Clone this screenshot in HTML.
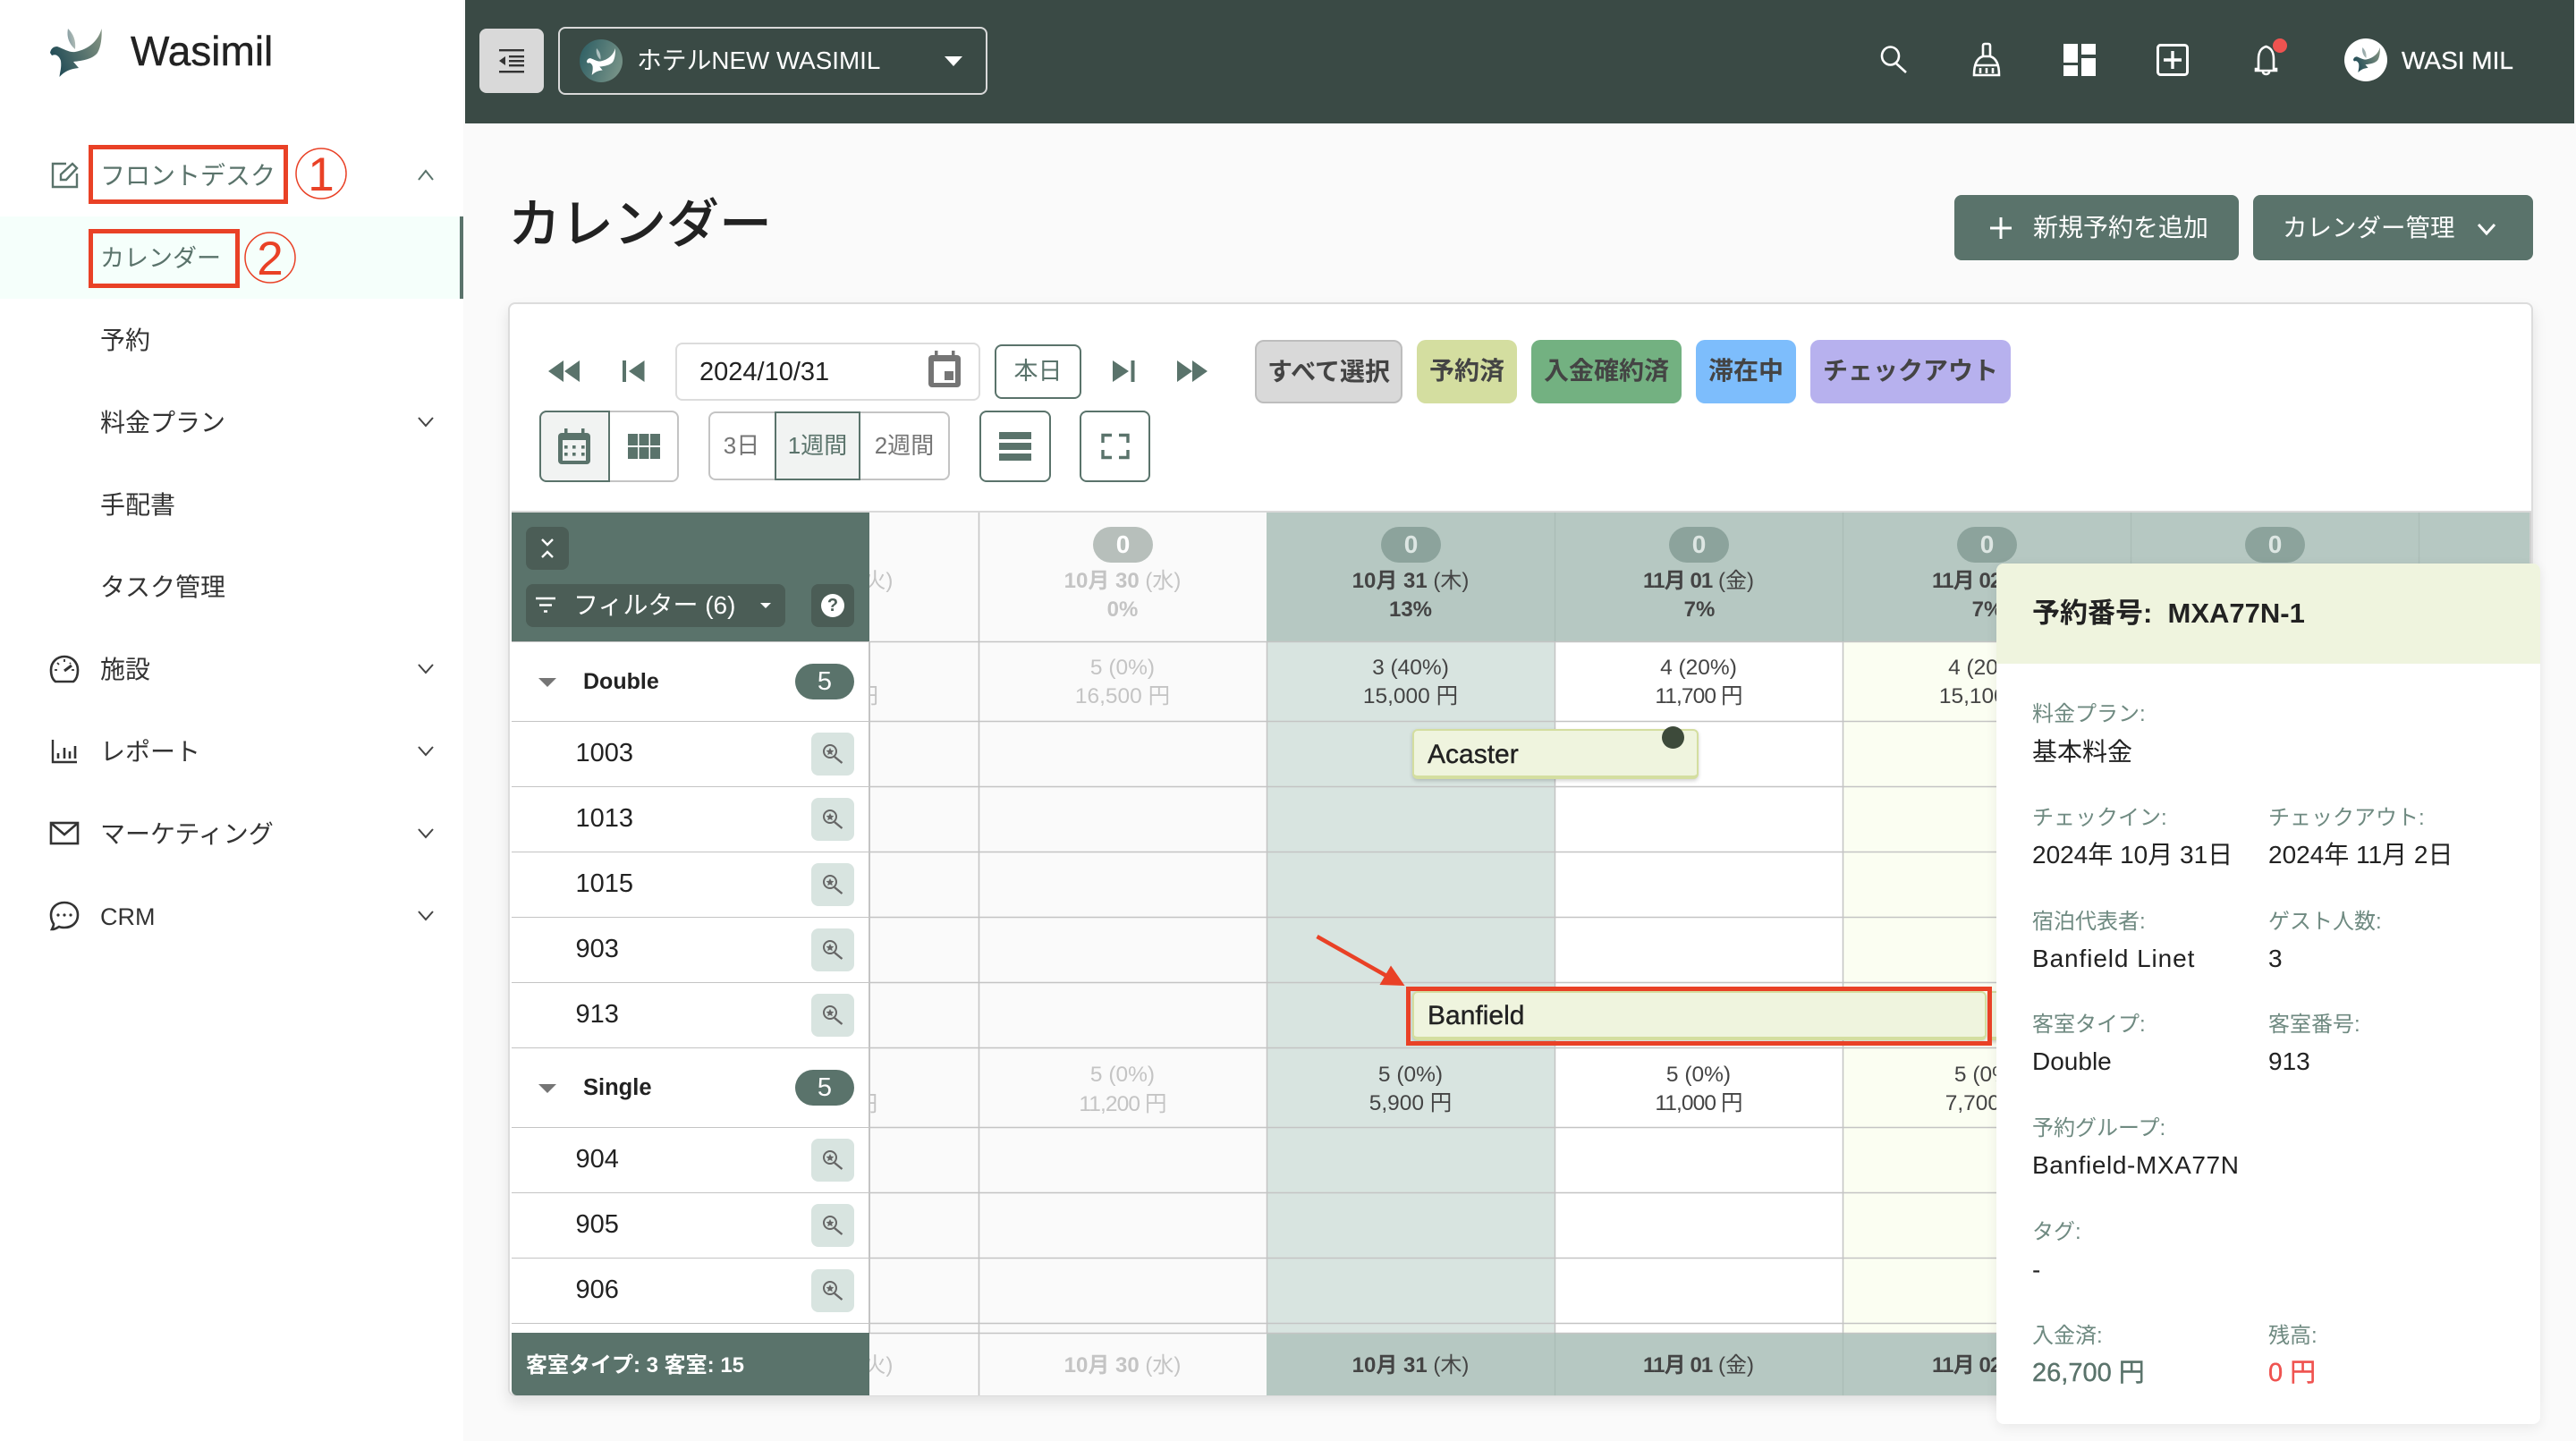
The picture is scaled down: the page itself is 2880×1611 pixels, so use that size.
<!DOCTYPE html>
<html lang="ja">
<head>
<meta charset="utf-8">
<title>Wasimil カレンダー</title>
<style>
html,body{margin:0;padding:0;width:2880px;height:1611px;overflow:hidden;background:#fafafa;font-family:"Liberation Sans","Noto Sans CJK JP",sans-serif;color:#333}
.a{position:absolute;box-sizing:border-box}
.t{position:absolute;white-space:nowrap;line-height:40px;height:40px}
.c{width:320px;text-align:center}
svg{position:absolute;left:0;top:0}
.s{font-size:28px;color:#333}
.g{color:#c4c4c4}
.d{color:#444}
.h{font-size:24px}
.v{font-size:24.5px}
.n{letter-spacing:-.9px}
.bd{position:absolute;top:589px;width:67px;height:40px;border-radius:20px;background:#8ca39c;color:#dde6e3;font-weight:700;font-size:28px;line-height:40px;text-align:center}
.rb{position:absolute;left:907px;width:48px;height:48px;border-radius:8px;background:#d8e4e0}
.rm{font-size:29px;color:#222;left:643.5px}
.chip{position:absolute;box-sizing:border-box;top:380px;height:71px;border-radius:10px;font-size:28px;font-weight:700;color:#444;line-height:69px;text-align:center}
.l{font-size:24px;color:#6f8a81}
.w{font-size:28px;color:#222}
.ev{position:absolute;box-sizing:border-box;left:1579px;background:#eff4de;border:2px solid #d4dea0;border-bottom-width:4px;border-radius:6px;box-shadow:0 2px 4px rgba(0,0,0,.18)}
.evt{font-size:30px;color:#222;left:1596px;-webkit-text-stroke:.4px #222}
</style>
</head>
<body>
<svg width="0" height="0" style="position:absolute">
<defs>
<linearGradient id="lg" x1="0" y1="0.6" x2="1" y2="0.2"><stop offset="0" stop-color="#1f4a55"/><stop offset="1" stop-color="#7f9080"/></linearGradient>
<symbol id="bird" viewBox="55 32 60 54"><path d="M113.6 32C110 45 100 55 84 58C78 59 72 55 64 52C60 52 57 54 56 59L58 62C62 60 66 62 68 68C69 76 67 80 66.5 86C72 80 78 77 88 76L82 69C92 68 104 66 109 59C113 52 114 42 113.6 32Z"/><path opacity=".55" d="M76 32C74 42 78 50 84 55C85 45 82 38 76 32Z"/></symbol>
<symbol id="zm" viewBox="0 0 48 48"><circle cx="21" cy="21" r="7" fill="none" stroke="#666" stroke-width="2"/><path d="M26 27L34.5 34" stroke="#666" stroke-width="2.4" fill="none"/><path d="M21 17l1.3 2.7 3 .4-2.2 2 .6 3-2.7-1.5-2.7 1.5.6-3-2.2-2 3-.4z" fill="#666"/></symbol>
</defs>
</svg>

<!-- sidebar -->
<div class="a" style="left:0;top:0;width:518px;height:1611px;background:#fff"></div>
<div class="a" style="left:0;top:242px;width:518px;height:92px;background:#f5fffb"></div>
<div class="a" style="left:514px;top:242px;width:4px;height:92px;background:#5a736b"></div>
<svg width="114" height="86" viewBox="0 0 114 86" style="overflow:visible"><use href="#bird" x="55" y="32" width="60" height="54" fill="url(#lg)"/></svg>
<div class="t" style="left:146px;top:37px;font-size:46px;color:#222;-webkit-text-stroke:.4px #222">Wasimil</div>
<div class="t s" style="left:112px;top:177px;color:#5a736b">フロントデスク</div>
<div class="t s" style="left:112px;top:269px;font-size:27px;color:#5a736b">カレンダー</div>
<div class="t s" style="left:112px;top:361px">予約</div>
<div class="t s" style="left:112px;top:453px">料金プラン</div>
<div class="t s" style="left:112px;top:545px">手配書</div>
<div class="t s" style="left:112px;top:637px">タスク管理</div>
<div class="t s" style="left:112px;top:729px">施設</div>
<div class="t s" style="left:112px;top:821px">レポート</div>
<div class="t s" style="left:112px;top:913px">マーケティング</div>
<div class="t s" style="left:112px;top:1005px;font-size:27px">CRM</div>

<!-- topbar -->
<div class="a" style="left:520px;top:0;width:2358px;height:138px;background:#3a4a45"></div>
<div class="a" style="left:536px;top:32px;width:72px;height:72px;background:#d9d9d9;border-radius:8px"></div>
<div class="a" style="left:624px;top:30px;width:480px;height:76px;border:2px solid #d9d9d9;border-radius:8px"></div>
<div class="a" style="left:648px;top:44px;width:48px;height:48px;border-radius:50%;background:linear-gradient(110deg,#2a5c62,#80998c)"></div>
<div class="t" style="left:712px;top:48px;font-size:27.8px;color:#fff">ホテルNEW WASIMIL</div>
<div class="a" style="left:2621px;top:43px;width:48px;height:48px;border-radius:50%;background:#fff"></div>
<div class="t" style="left:2685px;top:48px;font-size:28px;color:#fff;-webkit-text-stroke:.3px #fff">WASI MIL</div>

<svg width="2880" height="1611" viewBox="0 0 2880 1611">
<!-- sidebar icons -->
<g fill="none" stroke="#5a736b" stroke-width="2.4">
<path d="M74 183H59V209H86V194"/><path d="M68 201V195L81 183L86 188L74 201Z"/>
</g>
<path d="M468 201L476 191L484 201" fill="none" stroke="#5a736b" stroke-width="2"/>
<g fill="none" stroke="#444" stroke-width="2">
<path d="M468 467L476 476L484 467"/><path d="M468 743L476 752L484 743"/><path d="M468 835L476 844L484 835"/><path d="M468 927L476 936L484 927"/><path d="M468 1019L476 1028L484 1019"/>
</g>
<g fill="none" stroke="#333" stroke-width="2.6">
<path d="M62 762C58 759 57 754 57 749C57 740 64 734 72 734C80 734 87 740 87 749C87 754 86 759 82 762Z"/>
<path d="M72 750L80 744" stroke-width="3"/><path d="M72 737v3M61 749h3M80 749h3M64 741l2 2M79 741l-1 1" stroke-width="1.8"/>
<path d="M59 827V852H86" stroke-width="2.4"/>
<path d="M65 848V842M72 848V836M78 848V840M84 848V834" stroke-width="2.6"/>
<rect x="57" y="920" width="30" height="23"/><path d="M58 921L72 933L86 921"/>
<path d="M72 1009C63 1009 57 1015 57 1023C57 1027 58 1030 60 1033C60 1035 59 1037 58 1039C62 1039 64 1037 66 1036C68 1037 70 1037 72 1037C81 1037 87 1031 87 1023C87 1015 81 1009 72 1009Z"/>
</g>
<g fill="#333"><circle cx="65" cy="1023" r="1.6"/><circle cx="72" cy="1023" r="1.6"/><circle cx="79" cy="1023" r="1.6"/></g>
<!-- top left icons -->
<g fill="#333">
<rect x="558" y="55" width="28" height="2.4"/><rect x="569" y="62" width="17" height="2.4"/><rect x="569" y="67" width="17" height="2.4"/><rect x="569" y="72" width="17" height="2.4"/><rect x="558" y="79" width="28" height="2.4"/><path d="M558 68L565 63V73Z"/>
</g>
<path d="M1056 63H1076L1066 74Z" fill="#fff"/>
<use href="#bird" x="655" y="54" width="34" height="30" fill="#fff"/>
<use href="#bird" x="2630" y="53" width="32" height="28" fill="url(#lg)"/>
<!-- top right icons -->
<g fill="none" stroke="#fff" stroke-width="2.6">
<ellipse cx="2113.5" cy="62.5" rx="9.5" ry="10"/><path d="M2120 71L2131 81"/>
<path d="M2217 63V51a2 2 0 0 1 2-2h4a2 2 0 0 1 2 2V63M2217 63C2210 65 2207 72 2207 84H2235C2235 72 2232 65 2225 63Z"/>
<path d="M2208 73H2234M2214 76V82M2221 76V82M2228 76V82"/>
<rect x="2412.5" y="50.5" width="33" height="33" rx="3" stroke-width="3"/>
<path d="M2429 57V77M2419 67H2439" stroke-width="3.4"/>
<path d="M2533.5 52C2527 54 2525 59 2525 66V77H2522V79H2545V77H2542V66C2542 59 2540 54 2533.5 52Z"/><path d="M2530 80C2530 84 2537 84 2537 80"/>
</g>
<g fill="#fff">
<rect x="2307" y="49" width="16" height="21"/><rect x="2307" y="73" width="16" height="12"/><rect x="2327" y="49" width="16" height="12"/><rect x="2327" y="65" width="16" height="20"/>
</g>
<circle cx="2549" cy="51" r="8" fill="#ef5350"/>
</svg>

<!-- page head -->
<div class="t" style="left:568px;top:221px;height:60px;line-height:60px;font-size:59px;font-weight:500;color:#222">カレンダー</div>
<div class="a" style="left:2185px;top:218px;width:318px;height:73px;background:#5a736b;border-radius:8px"></div>
<div class="a" style="left:2519px;top:218px;width:313px;height:73px;background:#5a736b;border-radius:8px"></div>
<div class="t" style="left:2273px;top:235px;font-size:28px;color:#fff">新規予約を追加</div>
<div class="t" style="left:2552px;top:235px;font-size:27.5px;color:#fff">カレンダー管理</div>

<!-- card -->
<div class="a" style="left:568px;top:338px;width:2264px;height:1223px;background:#fff;border:2px solid #dcdcdc;border-radius:8px;box-shadow:0 8px 16px rgba(0,0,0,.1)"></div>

<!-- toolbar -->
<div class="a" style="left:755px;top:383px;width:341px;height:65px;border:2px solid #dcdcdc;border-radius:8px;background:#fff"></div>
<div class="t" style="left:782px;top:396px;font-size:29px;color:#222">2024/10/31</div>
<div class="a" style="left:1112px;top:385px;width:97px;height:61px;border:2px solid #5a736b;border-radius:8px"></div>
<div class="t" style="left:1112px;top:395px;width:97px;text-align:center;font-size:27px;color:#5a736b">本日</div>
<div class="a" style="left:603px;top:459px;width:156px;height:80px;border:2px solid #c4c4c4;border-radius:8px"></div>
<div class="a" style="left:603px;top:459px;width:79px;height:80px;border:2px solid #5a736b;border-radius:8px 0 0 8px;background:#f1f3f2"></div>
<div class="a" style="left:792px;top:460px;width:270px;height:77px;border:2px solid #c4c4c4;border-radius:8px"></div>
<div class="a" style="left:866px;top:460px;width:96px;height:77px;border:2px solid #5a736b;background:#f1f3f2"></div>
<div class="t" style="left:789px;width:80px;top:478px;text-align:center;font-size:26px;color:#757575">3日</div>
<div class="t" style="left:866px;width:96px;top:478px;text-align:center;font-size:26px;color:#5a736b">1週間</div>
<div class="t" style="left:962px;width:98px;top:478px;text-align:center;font-size:26px;color:#757575">2週間</div>
<div class="a" style="left:1095px;top:459px;width:80px;height:80px;border:2px solid #5a736b;border-radius:8px"></div>
<div class="a" style="left:1207px;top:459px;width:79px;height:80px;border:2px solid #5a736b;border-radius:8px"></div>

<div class="chip" style="left:1403px;width:165px;background:#d9d9d9;border:2px solid #bdbdbd;line-height:67px">すべて選択</div>
<div class="chip" style="left:1584px;width:112px;background:#d4dea0">予約済</div>
<div class="chip" style="left:1712px;width:168px;background:#73b181">入金確約済</div>
<div class="chip" style="left:1896px;width:112px;background:#7dbdfc">滞在中</div>
<div class="chip" style="left:2024px;width:224px;background:#b7b1ee">チェックアウト</div>

<!-- grid backgrounds -->
<div class="a" style="left:972px;top:571px;width:444px;height:989px;background:#fafafa"></div>
<div class="a" style="left:1416px;top:573px;width:1412px;height:144px;background:#b6c8c2"></div>
<div class="a" style="left:1416px;top:717px;width:322px;height:773px;background:#d8e4e0"></div>
<div class="a" style="left:1738px;top:717px;width:322px;height:773px;background:#fff"></div>
<div class="a" style="left:2060px;top:717px;width:768px;height:773px;background:#fbfef2"></div>
<div class="a" style="left:1416px;top:1490px;width:1412px;height:70px;background:#b6c8c2"></div>
<div class="a" style="left:572px;top:571px;width:2258px;height:2px;background:#d9d9d9"></div>

<svg width="2880" height="1611" viewBox="0 0 2880 1611">
<!-- toolbar icons -->
<g fill="#5a736b">
<path d="M630 403V427L613 415ZM648 403V427L631 415Z"/>
<rect x="696" y="403" width="4" height="24"/><path d="M720.5 403V427L703 415Z"/>
<path d="M1244 403V427L1262 415Z"/><rect x="1264.5" y="403" width="4" height="24"/>
<path d="M1316 403V427L1333 415ZM1333 403V427L1350 415Z"/>
<rect x="1117" y="483" width="36" height="8"/><rect x="1117" y="495" width="36" height="8"/><rect x="1117" y="507" width="36" height="8"/>
<rect x="702" y="485" width="11" height="13"/><rect x="714.5" y="485" width="11" height="13"/><rect x="727" y="485" width="11" height="13"/>
<rect x="702" y="500" width="11" height="13"/><rect x="714.5" y="500" width="11" height="13"/><rect x="727" y="500" width="11" height="13"/>
<rect x="624" y="484" width="36" height="35" rx="4"/><rect x="631" y="479" width="3.5" height="7"/><rect x="650" y="479" width="3.5" height="7"/>
</g>
<rect x="629" y="492" width="26" height="23" fill="#f1f3f2"/>
<g fill="#5a736b"><rect x="631" y="498" width="3.6" height="3.6"/><rect x="640" y="498" width="3.6" height="3.6"/><rect x="650" y="498" width="3.6" height="3.6"/><rect x="631" y="506" width="3.6" height="3.6"/><rect x="640" y="506" width="3.6" height="3.6"/><rect x="650" y="506" width="3.6" height="3.6"/></g>
<path d="M1233 495V486.5H1243M1251 486.5H1261V495M1233 503V511.5H1243M1251 511.5H1261V503" fill="none" stroke="#5a736b" stroke-width="3.4"/>
<g fill="#757575"><rect x="1038" y="397" width="36" height="36" rx="4"/><rect x="1045" y="392" width="3.5" height="7"/><rect x="1064" y="392" width="3.5" height="7"/></g>
<rect x="1044" y="404" width="24" height="24" fill="#fff"/><rect x="1056" y="415" width="10" height="10" fill="#757575"/>
<!-- grid lines -->
<g stroke="#c4c4c4" stroke-width="1.5" fill="none">
<path d="M572 717.5H2828M572 806.5H2828M572 879.5H2828M572 952.5H2828M572 1025.5H2828M572 1098.5H2828M572 1171.5H2828M572 1260.5H2828M572 1333.5H2828M572 1406.5H2828M572 1479.5H2828M572 1490.5H2828"/>
<path d="M1094.5 573V1560M1738.5 717V1490M2060.5 717V1490M1416.5 717V1490"/>
</g>
<path d="M1738.5 573V717M2060.5 573V717M2382.5 573V717M2704.5 573V717M1738.5 1490V1560M2060.5 1490V1560M2382.5 1490V1560M2704.5 1490V1560" stroke="#abbdb7" stroke-width="1.5" fill="none"/>
<path d="M2829 573V1560" stroke="#cfcfcf" stroke-width="2"/>
</svg>

<!-- date header texts -->
<div class="bd" style="left:1222px;background:#b7bfbb;color:#fff">0</div>
<div class="bd" style="left:1544px">0</div>
<div class="bd" style="left:1866px">0</div>
<div class="bd" style="left:2188px">0</div>
<div class="bd" style="left:2510px">0</div>

<div class="t c h g" style="left:773px;top:630px"><b>10月 29</b> (火)</div>
<div class="t c h g" style="left:1095px;top:630px"><b>10月 30</b> (水)</div>
<div class="t c h g" style="left:1095px;top:662px"><b>0%</b></div>
<div class="t c h d" style="left:1417px;top:630px"><b>10月 31</b> (木)</div>
<div class="t c h d" style="left:1417px;top:662px"><b>13%</b></div>
<div class="t c h d" style="left:1739px;top:630px"><b class="n">11月 01</b> (金)</div>
<div class="t c h d" style="left:1740px;top:662px"><b>7%</b></div>
<div class="t c h d" style="left:2062px;top:630px"><b class="n">11月 02</b> (土)</div>
<div class="t c h d" style="left:2062px;top:662px"><b>7%</b></div>

<!-- Double totals -->
<div class="t c v g" style="left:769px;top:759px">16,500 円</div>
<div class="t c v g" style="left:1095px;top:727px">5 (0%)</div>
<div class="t c v g" style="left:1095px;top:759px">16,500 円</div>
<div class="t c v d" style="left:1417px;top:727px">3 (40%)</div>
<div class="t c v d" style="left:1417px;top:759px">15,000 円</div>
<div class="t c v d" style="left:1739px;top:727px">4 (20%)</div>
<div class="t c v d n" style="left:1739px;top:759px">11,700 円</div>
<div class="t c v d" style="left:2061px;top:727px">4 (20%)</div>
<div class="t c v d" style="left:2061px;top:759px">15,100 円</div>
<!-- Single totals -->
<div class="t c v g" style="left:769px;top:1215px">11,200 円</div>
<div class="t c v g" style="left:1095px;top:1182px">5 (0%)</div>
<div class="t c v g n" style="left:1095px;top:1215px">11,200 円</div>
<div class="t c v d" style="left:1417px;top:1182px">5 (0%)</div>
<div class="t c v d" style="left:1417px;top:1214px">5,900 円</div>
<div class="t c v d" style="left:1739px;top:1182px">5 (0%)</div>
<div class="t c v d n" style="left:1739px;top:1214px">11,000 円</div>
<div class="t c v d" style="left:2061px;top:1182px">5 (0%)</div>
<div class="t c v d" style="left:2061px;top:1214px">7,700 円</div>
<!-- footer dates -->
<div class="t c h g" style="left:773px;top:1507px"><b>10月 29</b> (火)</div>
<div class="t c h g" style="left:1095px;top:1507px"><b>10月 30</b> (水)</div>
<div class="t c h d" style="left:1417px;top:1507px"><b>10月 31</b> (木)</div>
<div class="t c h d" style="left:1739px;top:1507px"><b class="n">11月 01</b> (金)</div>
<div class="t c h d" style="left:2062px;top:1507px"><b class="n">11月 02</b> (土)</div>

<!-- events -->
<div class="ev" style="top:1108px;width:642px;height:55px"></div>
<div class="ev" style="left:2224px;top:1108px;width:60px;height:55px;border-radius:0"></div>
<div class="ev" style="top:815px;width:320px;height:56px"></div>
<div class="t evt" style="top:824px">Acaster</div>
<div class="t evt" style="top:1116px">Banfield</div>
<div class="a" style="left:1858px;top:812px;width:25px;height:25px;border-radius:50%;background:#3d4a3a"></div>

<!-- left panel -->
<div class="a" style="left:572px;top:573px;width:400px;height:144px;background:#5a736b"></div>
<div class="a" style="left:572px;top:718px;width:399.5px;height:88px;background:#fff"></div>
<div class="a" style="left:572px;top:807px;width:399.5px;height:72px;background:#fff"></div>
<div class="a" style="left:572px;top:880px;width:399.5px;height:72px;background:#fff"></div>
<div class="a" style="left:572px;top:953px;width:399.5px;height:72px;background:#fff"></div>
<div class="a" style="left:572px;top:1026px;width:399.5px;height:72px;background:#fff"></div>
<div class="a" style="left:572px;top:1099px;width:399.5px;height:72px;background:#fff"></div>
<div class="a" style="left:572px;top:1172px;width:399.5px;height:88px;background:#fff"></div>
<div class="a" style="left:572px;top:1261px;width:399.5px;height:72px;background:#fff"></div>
<div class="a" style="left:572px;top:1334px;width:399.5px;height:72px;background:#fff"></div>
<div class="a" style="left:572px;top:1407px;width:399.5px;height:72px;background:#fff"></div>
<div class="a" style="left:572px;top:1480px;width:399.5px;height:10px;background:#fff"></div>
<div class="a" style="left:572px;top:1490px;width:400px;height:70px;background:#5a736b;border-radius:0 0 0 6px"></div>
<div class="a" style="left:971px;top:718px;width:1.5px;height:772px;background:#c4c4c4"></div>
<div class="a" style="left:588px;top:589px;width:48px;height:48px;border-radius:8px;background:#4b5d56"></div>
<div class="a" style="left:588px;top:653px;width:290px;height:48px;border-radius:8px;background:#4b5d56"></div>
<div class="a" style="left:907px;top:653px;width:48px;height:48px;border-radius:8px;background:#4b5d56"></div>
<div class="t" style="left:641px;top:657px;font-size:28px;color:#fff">フィルター (6)</div>
<div class="a" style="left:918px;top:664px;width:26px;height:26px;border-radius:50%;background:#fff;color:#4b5d56;font-weight:700;font-size:20px;line-height:26px;text-align:center">?</div>
<div class="t" style="left:652px;top:742px;font-size:25px;font-weight:700;color:#222">Double</div>
<div class="a" style="left:889px;top:742px;width:66px;height:40px;border-radius:20px;background:#5a736b;color:#fff;font-size:29px;line-height:40px;text-align:center">5</div>
<div class="t" style="left:652px;top:1196px;font-size:25.5px;font-weight:700;color:#222">Single</div>
<div class="a" style="left:889px;top:1196px;width:66px;height:40px;border-radius:20px;background:#5a736b;color:#fff;font-size:29px;line-height:40px;text-align:center">5</div>

<div class="t rm" style="top:822px">1003</div>
<div class="t rm" style="top:895px">1013</div>
<div class="t rm" style="top:968px">1015</div>
<div class="t rm" style="top:1041px">903</div>
<div class="t rm" style="top:1114px">913</div>
<div class="t rm" style="top:1276px">904</div>
<div class="t rm" style="top:1349px">905</div>
<div class="t rm" style="top:1422px">906</div>

<div class="rb" style="top:819px"><svg width="48" height="48"><use href="#zm"/></svg></div>
<div class="rb" style="top:892px"><svg width="48" height="48"><use href="#zm"/></svg></div>
<div class="rb" style="top:965px"><svg width="48" height="48"><use href="#zm"/></svg></div>
<div class="rb" style="top:1038px"><svg width="48" height="48"><use href="#zm"/></svg></div>
<div class="rb" style="top:1111px"><svg width="48" height="48"><use href="#zm"/></svg></div>
<div class="rb" style="top:1273px"><svg width="48" height="48"><use href="#zm"/></svg></div>
<div class="rb" style="top:1346px"><svg width="48" height="48"><use href="#zm"/></svg></div>
<div class="rb" style="top:1419px"><svg width="48" height="48"><use href="#zm"/></svg></div>

<div class="t" style="left:588px;top:1507px;font-size:24px;font-weight:700;color:#fff">客室タイプ: 3 客室: 15</div>

<svg width="2880" height="1611" viewBox="0 0 2880 1611">
<g fill="none" stroke="#fff" stroke-width="2.4"><path d="M606 603L612 609L618 603"/><path d="M606 623L612 617L618 623"/>
<path d="M599 669H621M603 676.5H617M608 683.5H612"/></g>
<path d="M850 674H862L856 680Z" fill="#fff"/>
<path d="M602 758H622L612 768Z" fill="#757575"/>
<path d="M602 1212H622L612 1222Z" fill="#757575"/>
<!-- page header button icons -->
<path d="M2237 243V267M2225 255H2249" stroke="#fff" stroke-width="3" fill="none"/>
<path d="M2771 251L2780 261L2789 251" stroke="#fff" stroke-width="3" fill="none"/>
</svg>

<!-- popup -->
<div class="a" style="left:2232px;top:630px;width:608px;height:962px;background:#fff;border-radius:8px;box-shadow:0 4px 14px rgba(0,0,0,.07)"></div>
<div class="a" style="left:2232px;top:630px;width:608px;height:112px;background:#eff4de;border-radius:8px 8px 0 0"></div>
<div class="t" style="left:2272px;top:666px;font-size:31px;font-weight:700;color:#222">予約番号:&nbsp; MXA77N-1</div>
<div class="t l" style="left:2272px;top:779px">料金プラン:</div>
<div class="t w" style="left:2272px;top:821px">基本料金</div>
<div class="t l" style="left:2272px;top:895px">チェックイン:</div>
<div class="t w" style="left:2272px;top:936px">2024年 10月 31日</div>
<div class="t l" style="left:2536px;top:895px">チェックアウト:</div>
<div class="t w" style="left:2536px;top:936px">2024年 11月 2日</div>
<div class="t l" style="left:2272px;top:1011px">宿泊代表者:</div>
<div class="t w" style="left:2272px;top:1052px;letter-spacing:.9px">Banfield Linet</div>
<div class="t l" style="left:2536px;top:1011px">ゲスト人数:</div>
<div class="t w" style="left:2536px;top:1052px">3</div>
<div class="t l" style="left:2272px;top:1126px">客室タイプ:</div>
<div class="t w" style="left:2272px;top:1167px">Double</div>
<div class="t l" style="left:2536px;top:1126px">客室番号:</div>
<div class="t w" style="left:2536px;top:1167px">913</div>
<div class="t l" style="left:2272px;top:1242px">予約グループ:</div>
<div class="t w" style="left:2272px;top:1283px;letter-spacing:.6px">Banfield-MXA77N</div>
<div class="t l" style="left:2272px;top:1358px">タグ:</div>
<div class="t w" style="left:2272px;top:1400px">-</div>
<div class="t l" style="left:2272px;top:1474px">入金済:</div>
<div class="t" style="left:2272px;top:1515px;font-size:29px;color:#5a736b;-webkit-text-stroke:.4px #5a736b">26,700 円</div>
<div class="t l" style="left:2536px;top:1474px">残高:</div>
<div class="t" style="left:2536px;top:1515px;font-size:29px;color:#ef5350;-webkit-text-stroke:.4px #ef5350">0 円</div>

<!-- annotations -->
<div class="a" style="left:99px;top:162px;width:223px;height:66px;border:5px solid #e94126"></div>
<div class="a" style="left:99px;top:256px;width:169px;height:66px;border:5px solid #e94126"></div>
<div class="a" style="left:1572px;top:1103px;width:655px;height:66px;border:5px solid #e94126"></div>
<svg width="2880" height="1611" viewBox="0 0 2880 1611">
<circle cx="359" cy="194" r="28" fill="none" stroke="#e94126" stroke-width="1.5"/>
<circle cx="302" cy="288" r="28" fill="none" stroke="#e94126" stroke-width="1.5"/>
<text x="359" y="213" text-anchor="middle" font-size="53" fill="#e94126" font-family="Liberation Sans">1</text>
<text x="302" y="307" text-anchor="middle" font-size="53" fill="#e94126" font-family="Liberation Sans">2</text>
<path d="M1472.5 1047L1552 1092" stroke="#e94126" stroke-width="4.5" fill="none"/>
<path d="M1570.5 1102L1542.5 1101L1555 1079.5Z" fill="#e94126"/>
</svg>
</body>
</html>
